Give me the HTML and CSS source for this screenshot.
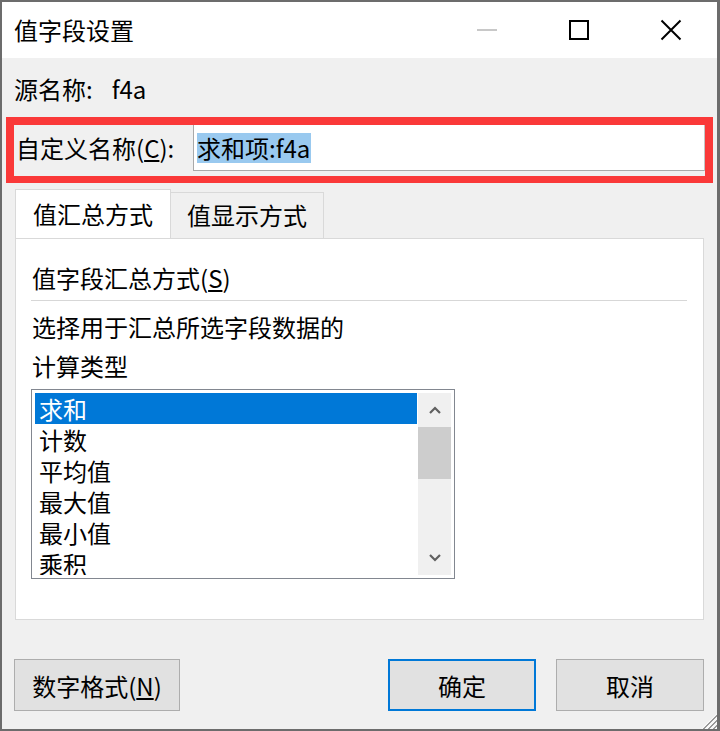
FILE: index.html
```html
<!DOCTYPE html>
<html lang="zh-CN">
<head>
<meta charset="utf-8">
<title>值字段设置</title>
<link rel="stylesheet" href="styles.css">
</head>
<body>
<div class="dialog">
  <div class="titlebar">
    <div class="title">值字段设置</div>
    <div class="caption">
      <div class="cap-btn"><span class="min-dash"></span></div>
      <div class="cap-btn">
        <svg width="22" height="22" viewBox="0 0 22 22"><rect x="2" y="2" width="18" height="18" fill="none" stroke="#000" stroke-width="2"/></svg>
      </div>
      <div class="cap-btn">
        <svg width="22" height="22" viewBox="0 0 22 22"><path d="M1.5 1.5 L20.5 20.5 M20.5 1.5 L1.5 20.5" stroke="#000" stroke-width="2" fill="none"/></svg>
      </div>
    </div>
  </div>
  <div class="content">
    <div class="source">源名称:<span class="src-val">f4a</span></div>
    <div class="custom-row">
      <label class="custom-label">自定义名称(<u>C</u>):</label>
      <div class="name-input"><span class="sel">求和项:f4a</span></div>
    </div>
    <div class="tabs">
      <div class="tab active">值汇总方式</div>
      <div class="tab">值显示方式</div>
    </div>
    <div class="panel">
      <div class="group-title">值字段汇总方式(<u>S</u>)</div>
      <div class="sep"></div>
      <div class="desc">选择用于汇总所选字段数据的<br>计算类型</div>
      <div class="listbox">
        <div class="items">
          <div class="item selected">求和</div>
          <div class="item">计数</div>
          <div class="item">平均值</div>
          <div class="item">最大值</div>
          <div class="item">最小值</div>
          <div class="item">乘积</div>
        </div>
        <div class="scrollbar">
          <div class="sb-btn">
            <svg width="12" height="8" viewBox="0 0 12 8"><polyline points="1,7 6,2 11,7" fill="none" stroke="#606060" stroke-width="2.2"/></svg>
          </div>
          <div class="sb-thumb"></div>
          <div class="sb-track"></div>
          <div class="sb-btn">
            <svg width="12" height="8" viewBox="0 0 12 8"><polyline points="1,1 6,6 11,1" fill="none" stroke="#606060" stroke-width="2.2"/></svg>
          </div>
        </div>
      </div>
    </div>
    <div class="buttons">
      <button class="btn btn-wide">数字格式(<u>N</u>)</button>
      <div class="spacer"></div>
      <button class="btn btn-default">确定</button>
      <button class="btn">取消</button>
    </div>
  </div>
  <div class="grip"></div>
</div>
</body>
</html>
```

FILE: styles.css
```css
html, body {
  margin: 0;
  padding: 0;
}
body {
  width: 720px;
  height: 731px;
  background: #6c6c6c;
  padding: 2px 3px 2px 2px;
  box-sizing: border-box;
  font-family: "Noto Sans CJK SC", "Noto Sans", sans-serif;
  font-size: 24px;
  color: #000;
  overflow: hidden;
}
.dialog {
  position: relative;
  width: 715px;
  height: 727px;
  background: #f0f0f0;
  display: flex;
  flex-direction: column;
}
.titlebar {
  height: 56px;
  background: #fff;
  display: flex;
  align-items: center;
}
.title {
  padding-left: 12px;
  padding-bottom: 2px;
  flex: 1;
}
.caption {
  display: flex;
  height: 100%;
}
.cap-btn {
  width: 92px;
  height: 100%;
  display: flex;
  align-items: center;
  justify-content: center;
}
.min-dash {
  width: 20px;
  height: 2px;
  background: #c8c8c8;
}
.content {
  flex: 1;
  display: flex;
  flex-direction: column;
}
.source {
  padding: 14px 0 0 12px;
  line-height: 34px;
  height: 34px;
  margin-bottom: 11px;
}
.src-val {
  margin-left: 19px;
}
.custom-row {
  margin: 0 4px;
  border: 8px solid #fa3939;
  border-bottom-width: 7px;
  height: 51px;
  display: flex;
  align-items: flex-start;
}
.custom-label {
  width: 177px;
  padding-left: 2px;
  line-height: 46px;
  height: 46px;
  flex: none;
}
.name-input {
  flex: 1;
  background: #fff;
  border: 1px solid #a9a9a9;
  border-top: none;
  border-right-color: #c4c4c4;
  box-sizing: content-box;
  padding: 5px 0 0 3px;
  height: 40px;
}
.sel {
  display: inline-block;
  background: #99c9ef;
  line-height: 30px;
  height: 30px;
  padding-right: 1px;
}
.tabs {
  display: flex;
  align-items: flex-end;
  margin: 7px 0 0 13px;
  height: 48px;
  position: relative;
  z-index: 1;
}
.tab {
  height: 45px;
  line-height: 44px;
  padding: 0 16px;
  border: 1px solid #d9d9d9;
  border-bottom: none;
  background: #f0f0f0;
}
.tab.active {
  height: 48px;
  line-height: 48px;
  background: #fff;
  padding: 0 17px;
}
.tab.active + .tab {
  border-left: none;
}
.panel {
  margin: 0 13px 0 13px;
  height: 380px;
  background: #fff;
  border: 1px solid #d9d9d9;
  padding: 0 16px 0 16px;
}
.group-title {
  margin-top: 22px;
  line-height: 34px;
  height: 34px;
}
.sep {
  margin-top: 5px;
  height: 1px;
  background: #d7d7d7;
  width: 656px;
  margin-left: -1px;
}
.desc {
  margin-top: 6px;
  line-height: 39px;
}
.listbox {
  margin-top: 4px;
  margin-left: -1px;
  width: 416px;
  height: 182px;
  border: 1px solid #828790;
  padding: 3px;
  display: flex;
  overflow: hidden;
  gap: 1px;
}
.items {
  flex: 1;
  overflow: hidden;
}
.item {
  height: 31px;
  line-height: 31px;
  padding-left: 4px;
  white-space: nowrap;
}
.item.selected {
  background: #0078d7;
  color: #fff;
}
.scrollbar {
  width: 33px;
  background: #f0f0f0;
  display: flex;
  flex-direction: column;
}
.sb-btn {
  height: 34px;
  display: flex;
  align-items: center;
  justify-content: center;
}
.sb-thumb {
  height: 52px;
  background: #cdcdcd;
}
.sb-track {
  flex: 1;
}
.buttons {
  display: flex;
  margin: 39px 13px 0 12px;
  gap: 20px;
}
.spacer {
  flex: 1;
}
.btn {
  font-family: inherit;
  font-size: 24px;
  color: #000;
  width: 148px;
  height: 52px;
  background: #e1e1e1;
  border: 1px solid #adadad;
  margin: 0;
  padding: 0;
}
.btn-wide {
  width: 166px;
}
.btn-default {
  border: 2px solid #0078d7;
}
.grip {
  position: absolute;
  right: 0;
  bottom: 0;
  width: 16px;
  height: 16px;
  background: repeating-linear-gradient(135deg, #f8f8f8 0 2px, #9a9a9a 2px 3.5px);
  clip-path: polygon(100% 0, 100% 100%, 0 100%);
}
```
